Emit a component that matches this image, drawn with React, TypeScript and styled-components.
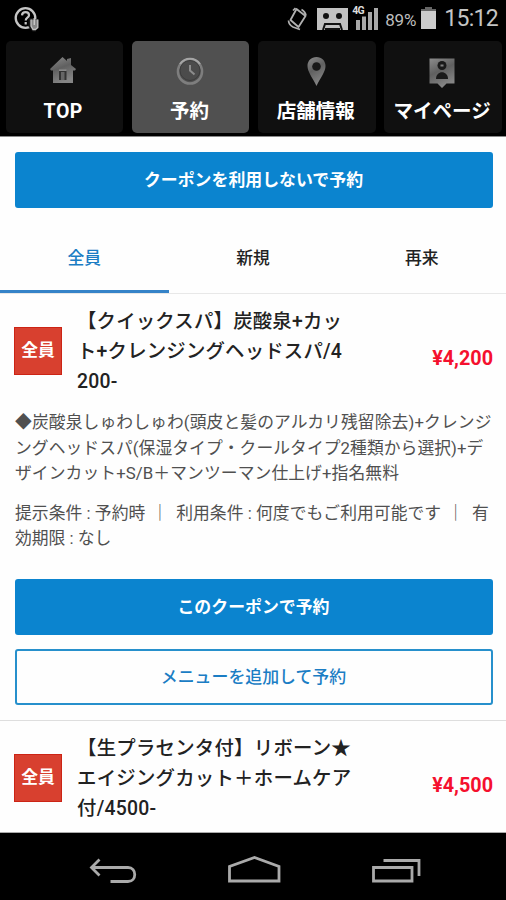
import React from 'react';
import styled, { createGlobalStyle, css } from 'styled-components';

const Global = createGlobalStyle`
  * { box-sizing: border-box; }
  body { margin: 0; background: #000; }
  button { font: inherit; border: 0; padding: 0; margin: 0; cursor: pointer; }
  p, h2 { margin: 0; font-weight: inherit; }
`;

const Screen = styled.div`
  width: 506px;
  height: 900px;
  display: flex;
  flex-direction: column;
  overflow: hidden;
  background: #000;
  color: #222;
  font-family: Roboto, 'Noto Sans CJK JP', sans-serif;
`;

const StatusBar = styled.header`
  height: 37px;
  flex: none;
  display: flex;
  align-items: center;
  padding: 0 8px 0 14px;
  color: #bdbdbd;
  svg { display: block; flex: none; }
`;
const StatusIcons = styled.div`
  margin-left: auto;
  display: flex;
  align-items: center;
`;
const Percent = styled.span`
  margin: 2px 5px 0 7px;
  font-size: 17px;
  letter-spacing: -0.2px;
`;
const Clock = styled.span`
  margin-left: 8px;
  font-size: 23px;
  line-height: 36px;
  letter-spacing: -0.7px;
  color: #c4c4c4;
`;

const TopNav = styled.nav`
  height: 100px;
  flex: none;
  display: grid;
  grid-template-columns: repeat(4, 117.500px);
  column-gap: 8.8px;
  padding: 4px 0 4px 5.5px;
  border-bottom: 1px solid #8a8a8a;
`;
const NavTile = styled.button<{ $active?: boolean }>`
  height: 92px;
  display: flex;
  flex-direction: column;
  align-items: center;
  border-radius: 5px;
  background: ${(p) => (p.$active ? '#505050' : '#101010')};
  color: #fff;
  padding: 14px 2px 0 0;
  svg { display: block; flex: none; }
`;
const NavLabel = styled.span<{ $spacing?: number }>`
  margin-top: 9px;
  font-size: 19.5px;
  line-height: 28px;
  font-weight: 700;
  white-space: nowrap;
  letter-spacing: ${(p) => p.$spacing ?? 0}px;
`;

const Content = styled.main`
  height: 696px;
  flex: none;
  background: #fefefe;
  overflow: hidden;
  border-bottom: 1px solid #aaa;
`;
const ActionButton = styled.button<{ $outline?: boolean }>`
  display: block;
  width: 478px;
  height: 56px;
  margin: 0 0 0 14.5px;
  border-radius: 3px;
  font-size: 16.9px;
  line-height: 53px;
  font-weight: 700;
  text-align: center;
  border: 2px solid #0b84cf;
  background: #0b84cf;
  color: #fff;
  ${(p) => p.$outline && css`
    background: #fefefe;
    border-color: #2790cc;
    color: #1b7dc4;
    font-weight: 500;
  `}
`;
const BookPlain = styled.div`
  height: 85px;
  padding-top: 15px;
`;
const Tabs = styled.div`
  height: 72px;
  display: grid;
  grid-template-columns: repeat(3, 1fr);
  box-shadow: inset 0 -1px 0 #e8e8e8;
`;
const Tab = styled.button<{ $active?: boolean }>`
  height: 71px;
  background: none;
  font-size: 16.8px;
  font-weight: 500;
  line-height: 70px;
  color: ${(p) => (p.$active ? '#1b7dc4' : '#222')};
  box-shadow: ${(p) => (p.$active ? 'inset 0 -3px 0 #3583c8' : 'none')};
`;

const Coupon = styled.article`
  padding-top: 12px;
  border-bottom: 1px solid #dedede;
  height: 427px;
`;
const CouponHead = styled.div`
  height: 90px;
  display: flex;
  align-items: flex-start;
  padding: 0 13px 0 14px;
`;
const Tag = styled.span`
  width: 48px;
  height: 48px;
  flex: none;
  margin-top: 21px;
  background: #d8402f;
  border: 1px solid #cc2415;
  color: #fff;
  font-size: 16.8px;
  line-height: 45px;
  font-weight: 700;
  text-align: center;
`;
const Title = styled.h2`
  width: 300px;
  margin: 1px 0 0 15px;
  font-size: 19.4px;
  line-height: 29.8px;
  font-weight: 500;
`;
const Line = styled.span<{ $spacing?: number }>`
  display: block;
  white-space: pre;
  letter-spacing: ${(p) => p.$spacing ?? 0}px;
`;
const Price = styled.span`
  margin: 40px 0 0 auto;
  font-size: 19.8px;
  line-height: 26px;
  font-weight: 700;
  color: #f5102e;
`;
const Body = styled.p`
  margin: 14px 0 0 15px;
  font-size: 16.8px;
  line-height: 25.5px;
  font-weight: 400;
  color: #505050;
`;
const Separator = styled.span`
  margin: 0 3.5px 0 2px;
`;
const Actions = styled.div`
  margin-top: 27px;
  display: flex;
  flex-direction: column;
  gap: 14px;
`;

const SystemBar = styled.footer`
  height: 67px;
  flex: none;
  display: flex;
  align-items: flex-start;
  padding: 18px 84px 0 88px;
  justify-content: space-between;
  svg { display: block; }
`;

const HelpIcon = () => (
  <svg width="26" height="26" viewBox="0 0 26 26" fill="none" stroke="#c5c5c5">
    <circle cx="11.5" cy="12" r="9.800" strokeWidth="2.300" />
    <path d="M8 9.300c.2-2.400 1.800-3.100 3.600-3.100 2 0 3.400 1.200 3.400 3 0 2.400-3.300 2.500-3.300 5.200M11.700 16v2.400" strokeWidth="2.200" />
    <path d="M16.500 15v-3M19 12v11M22.500 13.500V23M16.500 14v6l3 3.500h2.500" stroke="#161616" strokeWidth="4" />
    <path d="M17 13.500v6.500l2 3.500h2.500l2.300-2v-8" fill="#888" strokeWidth="1.300" />
    <path d="M20.300 12v7" strokeWidth="1.500" />
  </svg>
);
const RotateIcon = () => (
  <svg width="22" height="25" viewBox="0 0 22 25" fill="none" stroke="#b0b0b0">
    <path d="M9.500 3 3.500 14 11.500 21 18.500 10z" strokeWidth="1.800" strokeLinejoin="round" />
    <path d="M6 4.500 8.500 2M14.500 3.500c2.500 1.200 4 3.300 4.500 6M1.500 14.500c.2 3 1.700 5 4.500 6.500l7 2.500" strokeWidth="1.700" />
  </svg>
);
const TapeIcon = () => (
  <svg width="31" height="22" viewBox="0 0 31 22">
    <path fill="#c2c2c2" d="M0 0h31v22H0z" />
    <circle cx="9" cy="8" r="3" fill="#111" />
    <circle cx="22" cy="8" r="3" fill="#111" />
    <path fill="none" stroke="#111" strokeWidth="2" d="M6 22l2-6h15l2 6" />
    <path fill="#111" d="M8 20h15v2H8z" />
  </svg>
);
const SignalBox = styled.div`
  position: relative;
  width: 23px;
  height: 23px;
  margin-left: 7px;
`;
const NetworkLabel = styled.span`
  position: absolute;
  left: -3px;
  top: -2px;
  font-size: 10.5px;
  line-height: 12px;
  font-weight: 700;
  letter-spacing: -0.7px;
  color: #ddd;
  text-shadow: 0 0 1px #000, 0 0 1px #000;
`;
const SignalIcon = () => (
  <svg width="23" height="23" viewBox="0 0 23 23" fill="#a8a8a8">
    <path d="M1 13h4v10H1zM7 9.500h4V23H7zM13 5h4v18h-4zM19 1h4v22h-4z" />
  </svg>
);
const BatteryIcon = () => (
  <svg width="15" height="23" viewBox="0 0 15 23">
    <path fill="#666" d="M4 0h7v2h4v3H0V2h4z" />
    <path fill="#ccc" d="M0 4h15v18H0z" />
  </svg>
);
const IconGap = styled.i`
  width: 8px;
`;

const Shade = ({ id }: { id: string }) => (
  <linearGradient id={id} x1="0" y1="0" x2="0.4" y2="1">
    <stop offset="0" stopColor="#8c8c8c" />
    <stop offset="0.5" stopColor="#606060" />
    <stop offset="1" stopColor="#858585" />
  </linearGradient>
);
const HomeIcon = () => (
  <svg width="30" height="34" viewBox="0 0 30 34">
    <defs><Shade id="home" /></defs>
    <path fill="url(#home)" d="M14.500 2 19 6V4l4-1v7l5 4-1 1.500h-2V28H5V15.500H3L2 14z" />
    <path fill="#333" d="M11 15.500h7.500V25H11z" />
    <path fill="#666" d="M13 17h3.500v8H13z" />
    <path stroke="#999" strokeWidth="1.200" d="M11 15.200h7.500" />
  </svg>
);
const ClockIcon = () => (
  <svg width="30" height="34" viewBox="0 0 30 34">
    <circle cx="15" cy="16.500" r="12" fill="none" stroke="#7e7e7e" strokeWidth="2.600" />
    <circle cx="15" cy="15.500" r="10" fill="#4b4b4b" stroke="#3c3c3c" strokeWidth="1" />
    <path d="M5 9a12 12 0 0 1 20 0" fill="none" stroke="#a5a5a5" strokeWidth="2" />
    <path d="M15 10v5.500l4.500 4" fill="none" stroke="#8c8c8c" strokeWidth="2" />
  </svg>
);
const PinIcon = () => (
  <svg width="30" height="34" viewBox="0 0 30 34">
    <defs><Shade id="pin" /></defs>
    <path fill="url(#pin)" d="M15.500 2c5.200 0 9 3.800 9 9 0 6-5.200 12-9 20-3.800-8-9-14-9-20 0-5.200 3.800-9 9-9z" />
    <circle cx="15.500" cy="11.500" r="4.300" fill="#181818" />
  </svg>
);
const MemberIcon = () => (
  <svg width="30" height="34" viewBox="0 0 30 34">
    <defs><Shade id="member" /></defs>
    <path fill="url(#member)" d="M2.500 3.500h25v25H19.500L15 33l-4.500-4.500h-8z" />
    <circle cx="15" cy="10.500" r="4.500" fill="#1a1a1a" />
    <path fill="#1a1a1a" d="M9 24c0-9 12-9 12 0z" />
    <path fill="#808080" d="M13.500 9.500h3v2h-3z" />
  </svg>
);

const BackIcon = () => (
  <svg width="50" height="34" viewBox="0 0 50 34" fill="none" stroke="#aaa" strokeWidth="2.800">
    <path d="M11.500 8.500 3.500 16.500l8 8M3.500 16.500H40c9 0 9 14 0 14H22.500" />
  </svg>
);
const HomeKeyIcon = () => (
  <svg width="54" height="34" viewBox="0 0 54 34" fill="none" stroke="#aaa" strokeWidth="2.800">
    <path d="M1.500 30V15.500L26.500 6.500l24.500 9V30z" />
  </svg>
);
const RecentsIcon = () => (
  <svg width="50" height="34" viewBox="0 0 50 34" fill="none" stroke="#aaa" strokeWidth="2.800">
    <path d="M1.500 16.500h38.500V30H1.500zM11.500 9.500h35.500V25" />
  </svg>
);

const navItems = [
  { label: 'TOP', icon: <HomeIcon />, spacing: 0.5 },
  { label: '予約', icon: <ClockIcon />, active: true },
  { label: '店舗情報', icon: <PinIcon /> },
  { label: 'マイページ', icon: <MemberIcon /> },
];

export default function App() {
  return (
    <>
      <Global />
      <Screen>
        <StatusBar>
          <HelpIcon />
          <StatusIcons>
            <RotateIcon />
            <IconGap />
            <TapeIcon />
            <SignalBox>
              <SignalIcon />
              <NetworkLabel>4G</NetworkLabel>
            </SignalBox>
            <Percent>89%</Percent>
            <BatteryIcon />
            <Clock>15:12</Clock>
          </StatusIcons>
        </StatusBar>
        <TopNav>
          {navItems.map((n) => (
            <NavTile key={n.label} $active={n.active}>
              {n.icon}
              <NavLabel $spacing={n.spacing}>{n.label}</NavLabel>
            </NavTile>
          ))}
        </TopNav>
        <Content>
          <BookPlain>
            <ActionButton>クーポンを利用しないで予約</ActionButton>
          </BookPlain>
          <Tabs>
            <Tab $active>全員</Tab>
            <Tab>新規</Tab>
            <Tab>再来</Tab>
          </Tabs>
          <Coupon>
            <CouponHead>
              <Tag>全員</Tag>
              <Title>
                <Line $spacing={0.2}>【クイックスパ】炭酸泉+カッ</Line>
                <Line $spacing={0.2}>ト+クレンジングヘッドスパ/4</Line>
                <Line $spacing={0.2}>200-</Line>
              </Title>
              <Price>¥4,200</Price>
            </CouponHead>
            <Body>
              <Line $spacing={0.1}>◆炭酸泉しゅわしゅわ(頭皮と髪のアルカリ残留除去)+クレンジ</Line>
              <Line $spacing={0.05}>ングヘッドスパ(保湿タイプ・クールタイプ2種類から選択)+デ</Line>
              <Line $spacing={0.08}>ザインカット+S/B＋マンツーマン仕上げ+指名無料</Line>
            </Body>
            <Body>
              <Line $spacing={0.05}>
                提示条件 : 予約時 <Separator>｜</Separator> 利用条件 : 何度でもご利用可能です <Separator>｜</Separator> 有
              </Line>
              <Line>効期限 : なし</Line>
            </Body>
            <Actions>
              <ActionButton>このクーポンで予約</ActionButton>
              <ActionButton $outline>メニューを追加して予約</ActionButton>
            </Actions>
          </Coupon>
          <Coupon>
            <CouponHead>
              <Tag>全員</Tag>
              <Title>
                <Line $spacing={0.25}>【生プラセンタ付】リボーン★</Line>
                <Line $spacing={0.25}>エイジングカット＋ホームケア</Line>
                <Line $spacing={0.25}>付/4500-</Line>
              </Title>
              <Price>¥4,500</Price>
            </CouponHead>
          </Coupon>
        </Content>
        <SystemBar>
          <BackIcon />
          <HomeKeyIcon />
          <RecentsIcon />
        </SystemBar>
      </Screen>
    </>
  );
}
